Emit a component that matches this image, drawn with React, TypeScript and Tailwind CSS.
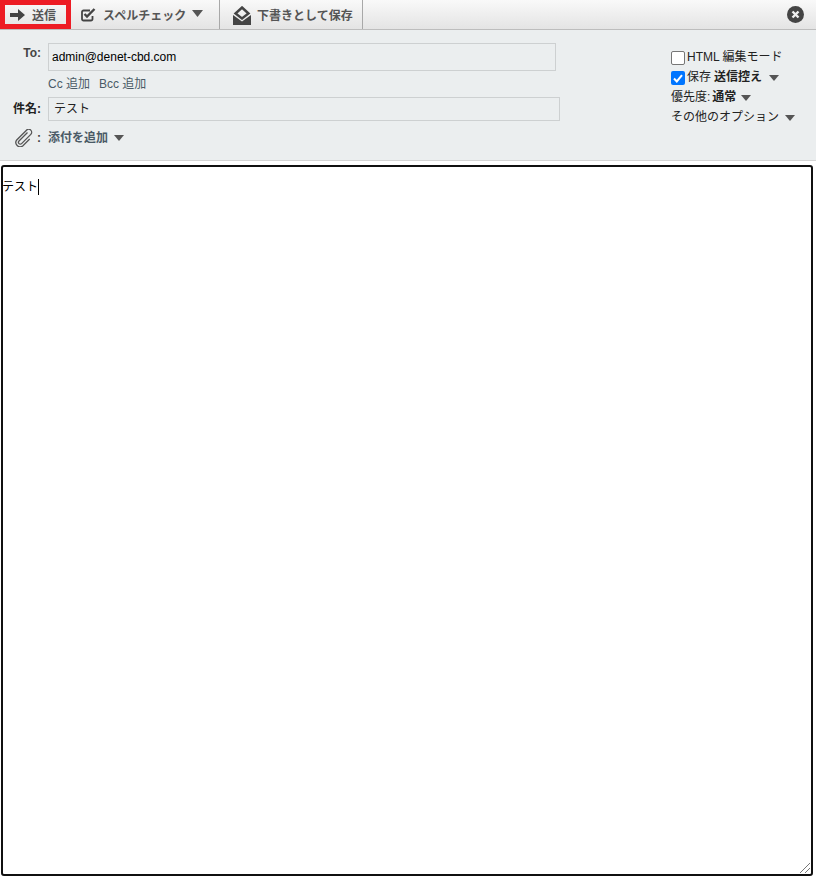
const font = 'font-["Liberation_Sans","Noto_Sans_CJK_JP",sans-serif]';

function Caret() {
  return (
    <svg width="10" height="6" viewBox="0 0 10 6" className="inline-block">
      <path d="M0 0h10L5 6z" fill="#555" />
    </svg>
  );
}

function Toolbar() {
  return (
    <div className="flex h-[30px] items-stretch border-b border-[#bdbdbd] bg-gradient-to-b from-[#f9f9f9] to-[#e4e4e4] text-[12px] font-bold text-[#555]">
      <div className="flex w-[71px] items-center gap-[7px] border-[5px] border-[#ed1c24] pl-[5px]">
        <svg width="15" height="12" viewBox="0 0 15 12">
          <path d="M0 4h8V0l7 6-7 6V8H0z" fill="#444" />
        </svg>
        <span className="mt-[3px]">送信</span>
      </div>
      <div className="flex w-[149px] items-center border-r border-[#a8a8a8] pl-[10px]">
        <svg width="15" height="14" viewBox="0 0 15 14" fill="none">
          <path d="M11.500 8v3a1.500 1.500 0 0 1-1.500 1.500H2.500A1.500 1.500 0 0 1 1 11V4A1.500 1.500 0 0 1 2.500 2.500H9" stroke="#444" strokeWidth="1.800" />
          <path d="M3.500 6l2.500 2.500 7.500-7.500" stroke="#444" strokeWidth="2.400" />
        </svg>
        <span className="mt-[2px] ml-[7px]">スペルチェック</span>
        <span className="mb-[2px] ml-[6px] flex"><svg width="11" height="7" viewBox="0 0 11 7"><path d="M0 0h11L5.500 7z" fill="#555" /></svg></span>
      </div>
      <div className="flex w-[143px] items-center border-r border-[#a8a8a8] pl-[13px]">
        <svg width="18" height="19" viewBox="0 0 18 19" className="mt-[2px]">
          <path d="M9 1.500l6.500 6-6.500 5-6.500-5z" fill="none" stroke="#444" strokeWidth="2.400" />
          <path d="M0 9l9 6.500L18 9v10H0z" fill="#444" />
        </svg>
        <span className="mt-[2px] ml-[6px]">下書きとして保存</span>
      </div>
      <div className="ml-auto flex items-center pr-[12px]">
        <svg width="17" height="17" viewBox="0 0 17 17">
          <circle cx="8.500" cy="8.500" r="8.500" fill="#444" />
          <path d="M5.500 5.500l6 6M11.500 5.500l-6 6" stroke="#eee" strokeWidth="2.400" />
        </svg>
      </div>
    </div>
  );
}

function Fields() {
  return (
    <div className="flex h-[131px] border-b border-[#d4d4d4] bg-[#ebeeef]">
      <div className="w-[671px] shrink-0 pt-[13px]">
        <div className="flex">
          <span className="w-[41px] pt-[2px] text-right text-[12px] font-bold leading-[16px] text-[#444]">To:</span>
          <div className="ml-[7px] flex h-[28px] w-[508px] items-center border border-[#cdd0d1] pl-[3px] text-[12px] text-black">admin@denet-cbd.com</div>
        </div>
        <div className="ml-[48px] mt-[5px] flex h-[16px] items-center gap-[9px] text-[12px] text-[#4a5a66]">
          <span>Cc 追加</span>
          <span>Bcc 追加</span>
        </div>
        <div className="mt-[5px] flex">
          <span className="flex w-[41px] items-center justify-end text-[12px] font-bold text-[#222]">件名:</span>
          <div className="ml-[7px] flex h-[24px] w-[512px] items-center border border-[#cdd0d1] pl-[5px] text-[12px] text-[#222]">テスト</div>
        </div>
        <div className="mt-[7px] flex h-[19px] items-center">
          <svg width="20" height="18" viewBox="0 0 20 18" fill="none" className="ml-[14px]">
            <path d="M13.500 3.500L5 12a1.800 1.800 0 0 0 2.600 2.600L16.800 5.400a3 3 0 0 0-4.300-4.200L2.700 11a4.300 4.300 0 0 0 6 6l7-7" stroke="#555" strokeWidth="1.300" />
          </svg>
          <span className="ml-[3px] w-[11px] text-[12px] font-bold text-[#444]">:</span>
          <span className="text-[12px] font-bold text-[#4a5a66]">添付を追加</span>
          <span className="ml-[6px] flex"><Caret /></span>
        </div>
      </div>
      <div className="pt-[18px] text-[12px] leading-[19.500px] text-[#222]">
        <div className="flex h-[20px] items-center">
          <span className="h-[14px] w-[14px] rounded-[2px] border border-[#767676] bg-white" />
          <span className="ml-[2px]">HTML 編集モード</span>
        </div>
        <div className="flex h-[20px] items-center">
          <span className="flex h-[14px] w-[14px] items-center justify-center rounded-[2px] bg-[#0075ff]">
            <svg width="10" height="9" viewBox="0 0 10 9" fill="none"><path d="M1 4.500l2.800 3L9 1.200" stroke="#fff" strokeWidth="2" /></svg>
          </span>
          <span className="ml-[2px]">保存</span>
          <span className="ml-[3px] font-bold">送信控え</span>
          <span className="ml-[7px] flex"><Caret /></span>
        </div>
        <div className="flex h-[20px] items-center">
          <span>優先度:</span>
          <span className="ml-[2px] font-bold">通常</span>
          <span className="ml-[5px] flex"><Caret /></span>
        </div>
        <div className="flex h-[19px] items-center">
          <span>その他のオプション</span>
          <span className="ml-[6px] flex"><Caret /></span>
        </div>
      </div>
    </div>
  );
}

export default function App() {
  return (
    <div className={`h-[880px] w-[816px] overflow-hidden bg-white ${font}`}>
      <Toolbar />
      <Fields />
      {/* message body, focused */}
      <div className="pt-[4px] pl-px">
        <div className="relative h-[711px] w-[812px] rounded-[3px] border-2 border-[#101010] bg-white pt-[12px] text-[12px] leading-[17px] text-black">
          <span className="-ml-px inline-block h-[16px] border-r border-black align-top">テスト</span>
          <svg width="12" height="12" viewBox="0 0 12 12" className="absolute right-0 bottom-0">
            <path d="M1 11L11 1M6 11l5-5" stroke="#777" strokeWidth="1" />
          </svg>
        </div>
      </div>
    </div>
  );
}
